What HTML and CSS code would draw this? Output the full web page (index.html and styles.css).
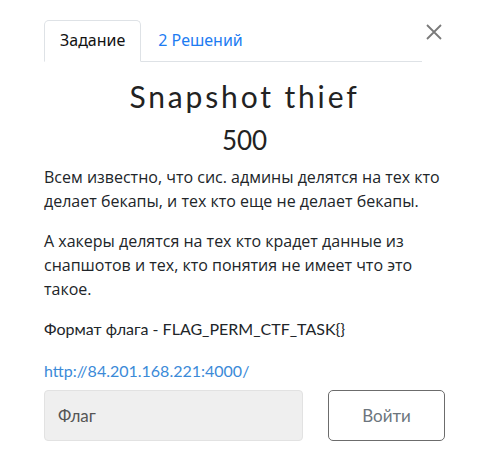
FILE: index.html
```html
<!DOCTYPE html>
<html lang="ru">
<head>
<meta charset="utf-8">
<link rel="stylesheet" href="styles.css">
</head>
<body>
<div class="modal">
  <div class="header">
    <ul class="tabs">
      <li class="tab active">Задание</li>
      <li class="tab link">2 Решений</li>
    </ul>
    <button class="close" aria-label="Close">
      <svg width="16" height="16" viewBox="0 0 16 16"><path d="M1 1 L15 15 M15 1 L1 15" stroke="#7a7a7a" stroke-width="1.8" fill="none"/></svg>
    </button>
  </div>
  <h2 class="title">Snapshot thief</h2>
  <h3 class="points">500</h3>
  <div class="desc">
    <p>Всем известно, что сис. админы делятся на тех кто делает бекапы, и тех кто еще не делает бекапы.</p>
    <p>А хакеры делятся на тех кто крадет данные из снапшотов и тех, кто понятия не имеет что это такое.</p>
  </div>
  <p class="format">Формат флага - FLAG_PERM_CTF_TASK{}</p>
  <a class="url" href="#">http://84.201.168.221:4000/</a>
  <form class="submit-row">
    <input class="flag" type="text" placeholder="Флаг">
    <button class="submit" type="button">Войти</button>
  </form>
</div>
</body>
</html>
```
FILE: styles.css
```css
html, body {
  margin: 0;
  padding: 0;
  background: #fff;
}
body {
  font-family: Lato, "Open Sans", sans-serif;
  color: #212529;
}
.modal {
  padding: 20px 44px 0 44px;
}
.header {
  display: flex;
  align-items: flex-start;
}
.tabs {
  list-style: none;
  margin: 0;
  padding: 0;
  display: flex;
  width: 378px;
  border-bottom: 1px solid #dee2e6;
}
.tab {
  font-family: "Noto Sans", sans-serif;
  font-size: 16px;
  line-height: 21px;
  padding: 9px 15px 10px;
  border: 1px solid transparent;
  border-radius: 5px 5px 0 0;
  margin-bottom: -1px;
}
.tab.active {
  color: #111;
  border-color: #dee2e6 #dee2e6 #fff;
  background: #fff;
}
.tab.link {
  color: #1d7cf2;
  padding-left: 16px;
}
.close {
  margin-left: 4px;
  margin-top: 4px;
  background: none;
  border: 0;
  padding: 0;
  width: 16px;
  height: 16px;
  display: flex;
}
.title {
  margin: 17px 0 0;
  text-align: center;
  font-family: Lato, sans-serif;
  font-weight: 400;
  font-size: 30px;
  letter-spacing: 2.85px;
  line-height: 34px;
  color: #222;
}
.points {
  margin: 11px 0 0;
  text-align: center;
  font-family: Lato, sans-serif;
  font-weight: 400;
  font-size: 26px;
  line-height: 32px;
  color: #222;
}
.desc {
  margin-top: 9px;
  font-family: "Open Sans", sans-serif;
  font-size: 16px;
  letter-spacing: 0;
  line-height: 24px;
  color: #212529;
}
.desc p {
  margin: 0 0 16px;
}
.format {
  margin: 0 0 18px;
  font-size: 16px;
  line-height: 24px;
  color: #212529;
}
.url {
  display: block;
  font-size: 16px;
  line-height: 24px;
  color: #3b8ad8;
  text-decoration: none;
}
.submit-row {
  margin-top: 7px;
  display: flex;
  justify-content: space-between;
}
.flag {
  box-sizing: border-box;
  width: 259px;
  height: 51px;
  background: #efefef;
  border: 1px solid #e2e2e2;
  border-radius: 4px;
  padding: 0 13px;
  font-family: Lato, sans-serif;
  font-size: 17px;
  color: #555;
}
.flag::placeholder {
  color: #555;
}
.submit {
  box-sizing: border-box;
  width: 117px;
  height: 51px;
  background: #fff;
  border: 1px solid #6c6c6c;
  border-radius: 5px;
  font-family: Lato, sans-serif;
  font-size: 17px;
  color: #6c757d;
}
```
